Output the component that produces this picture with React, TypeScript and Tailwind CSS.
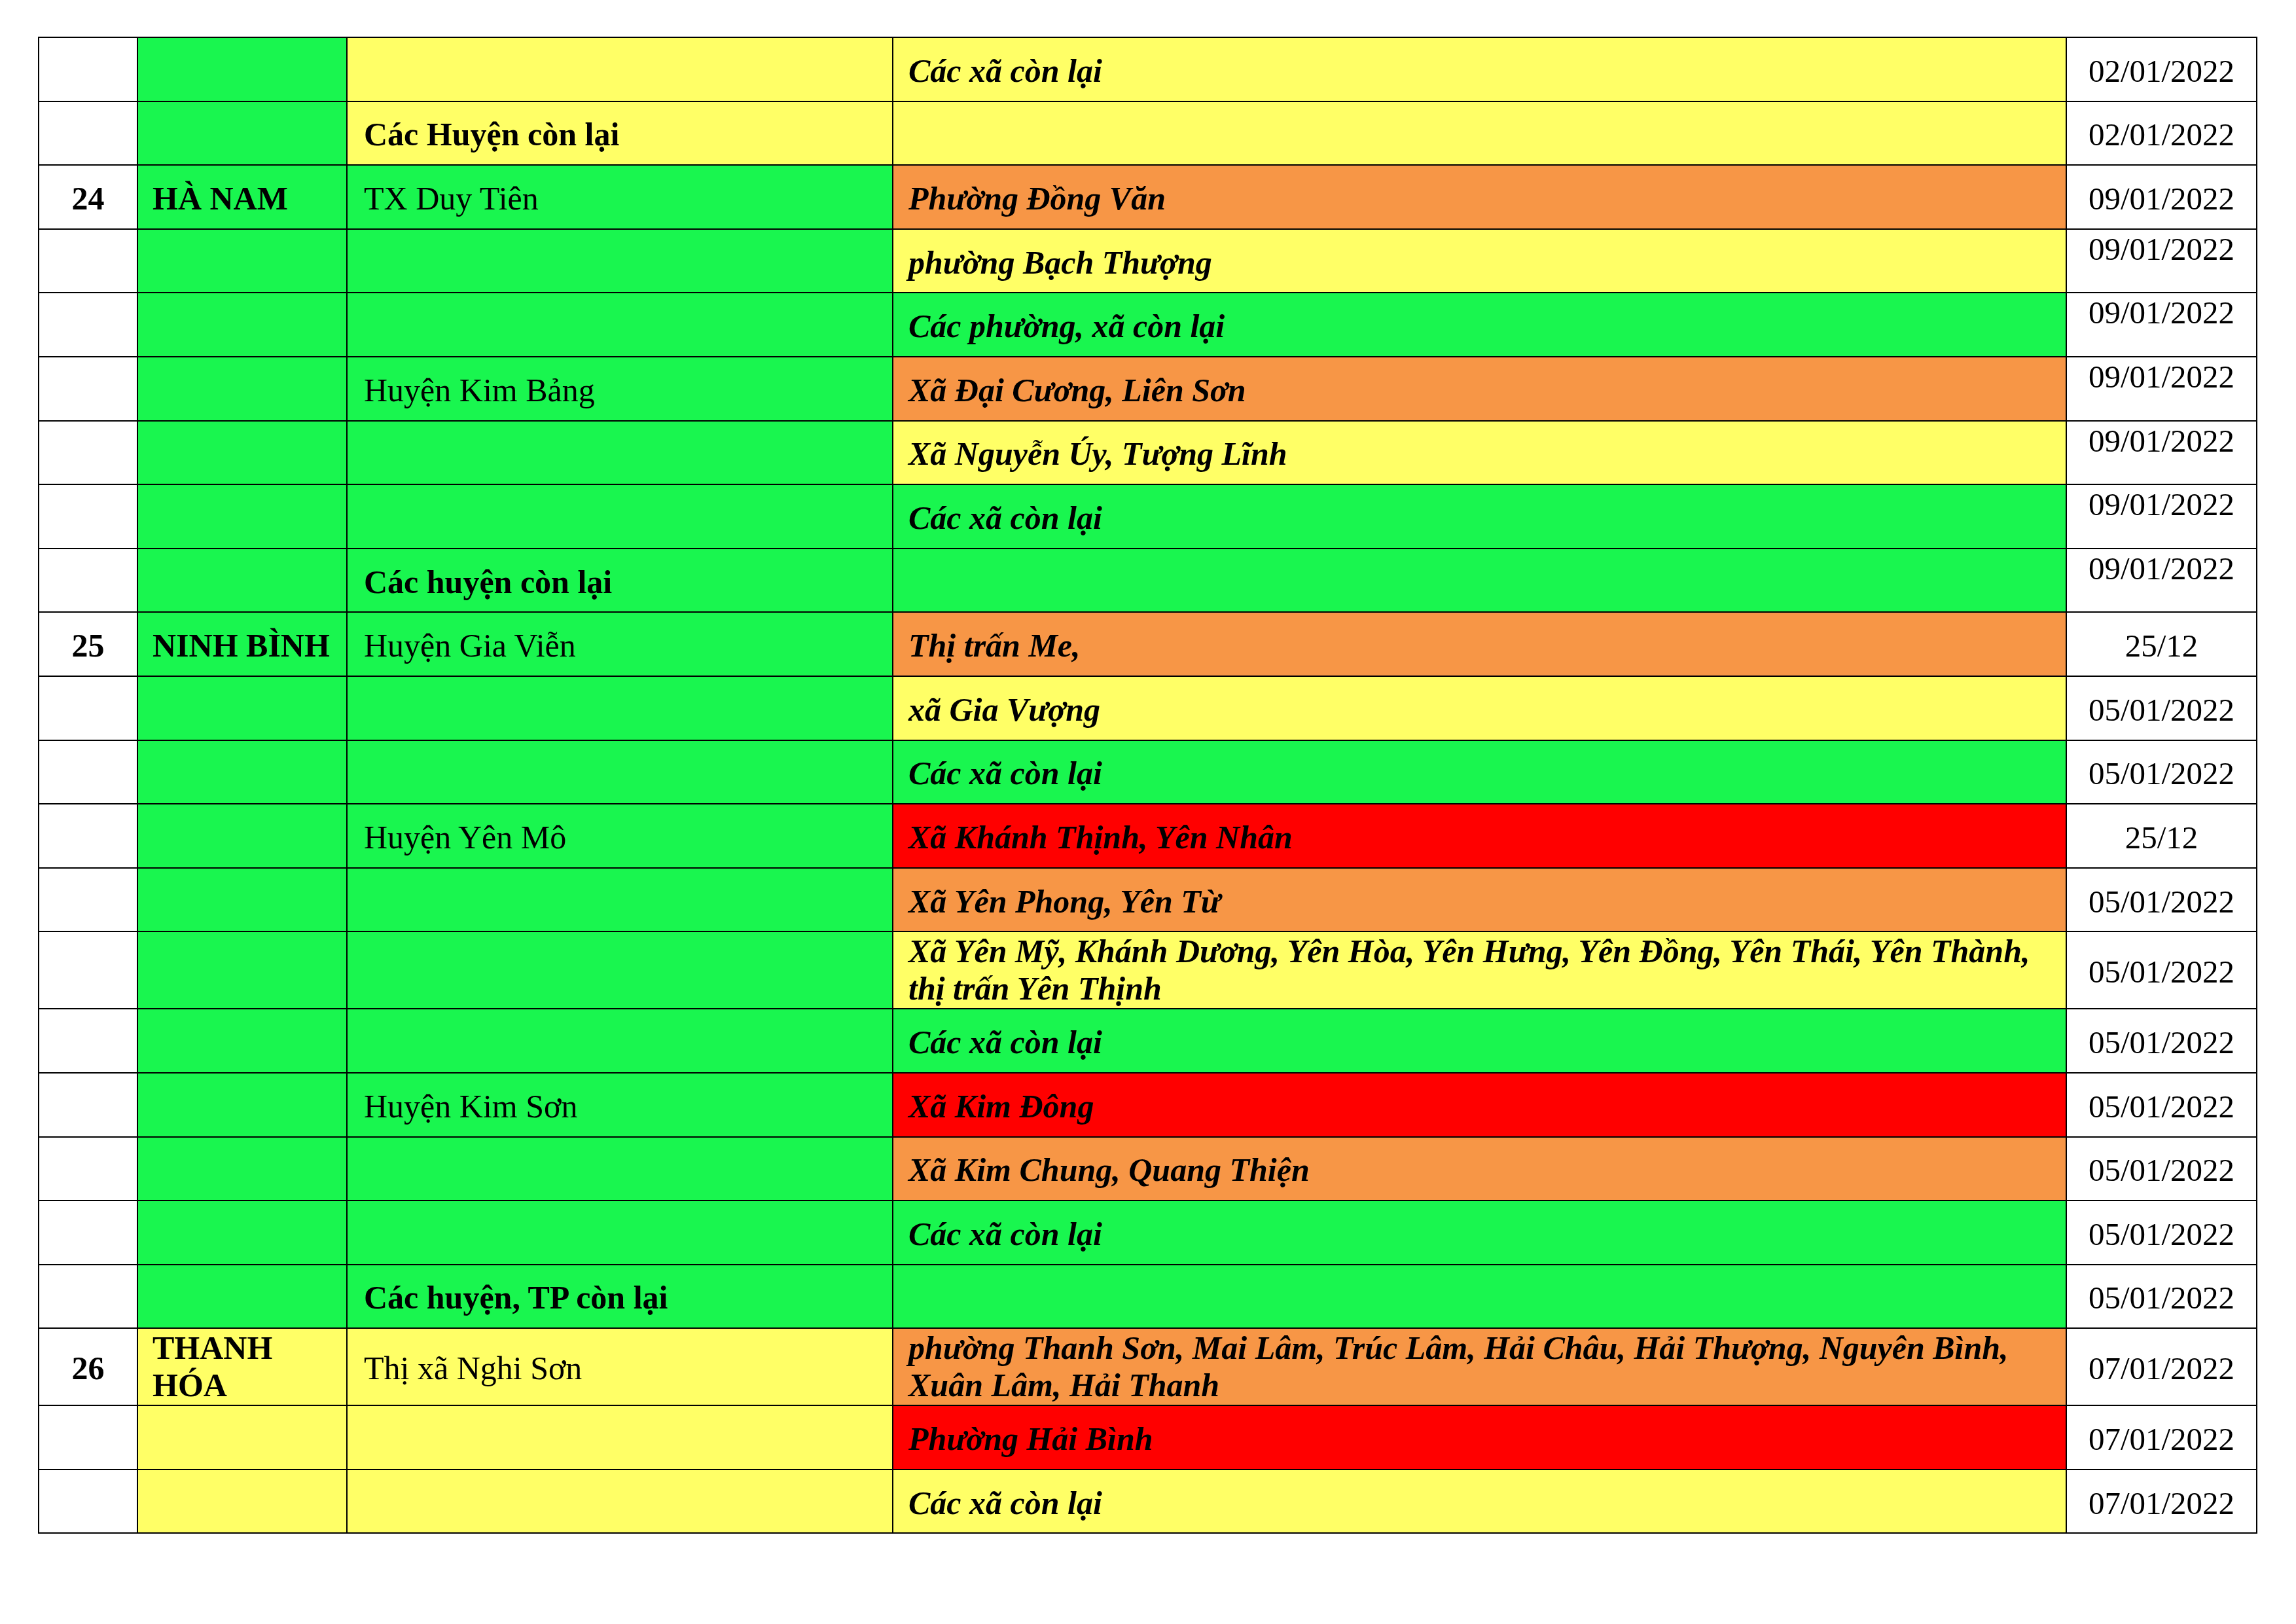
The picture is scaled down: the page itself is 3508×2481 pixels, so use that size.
import React from "react";

type C = "w" | "g" | "y" | "o" | "r";
const BG: Record<C, string> = {
  w: "bg-white",
  g: "bg-[#19f64f]",
  y: "bg-[#ffff66]",
  o: "bg-[#f79646]",
  r: "bg-[#ff0000]",
};

type Row = {
  no?: string;
  prov?: React.ReactNode;
  provTwo?: boolean;
  provBg: C;
  dist?: string;
  distBold?: boolean;
  distBg: C;
  comm?: React.ReactNode;
  commTwo?: boolean;
  commBg: C;
  date: string;
  top?: boolean;
};

const rows: Row[] = [
  { provBg: "g", distBg: "y", comm: "Các xã còn lại", commBg: "y", date: "02/01/2022" },
  { provBg: "g", dist: "Các Huyện còn lại", distBold: true, distBg: "y", commBg: "y", date: "02/01/2022" },
  { no: "24", prov: "HÀ NAM", provBg: "g", dist: "TX Duy Tiên", distBg: "g", comm: "Phường Đồng Văn", commBg: "o", date: "09/01/2022" },
  { provBg: "g", distBg: "g", comm: "phường Bạch Thượng", commBg: "y", date: "09/01/2022", top: true },
  { provBg: "g", distBg: "g", comm: "Các phường, xã còn lại", commBg: "g", date: "09/01/2022", top: true },
  { provBg: "g", dist: "Huyện Kim Bảng", distBg: "g", comm: "Xã Đại Cương, Liên Sơn", commBg: "o", date: "09/01/2022", top: true },
  { provBg: "g", distBg: "g", comm: "Xã Nguyễn Úy, Tượng Lĩnh", commBg: "y", date: "09/01/2022", top: true },
  { provBg: "g", distBg: "g", comm: "Các xã còn lại", commBg: "g", date: "09/01/2022", top: true },
  { provBg: "g", dist: "Các huyện còn lại", distBold: true, distBg: "g", commBg: "g", date: "09/01/2022", top: true },
  { no: "25", prov: "NINH BÌNH", provBg: "g", dist: "Huyện Gia Viễn", distBg: "g", comm: "Thị trấn Me,", commBg: "o", date: "25/12" },
  { provBg: "g", distBg: "g", comm: "xã Gia Vượng", commBg: "y", date: "05/01/2022" },
  { provBg: "g", distBg: "g", comm: "Các xã còn lại", commBg: "g", date: "05/01/2022" },
  { provBg: "g", dist: "Huyện Yên Mô", distBg: "g", comm: "Xã Khánh Thịnh, Yên Nhân", commBg: "r", date: "25/12" },
  { provBg: "g", distBg: "g", comm: "Xã Yên Phong, Yên Từ", commBg: "o", date: "05/01/2022" },
  {
    provBg: "g",
    distBg: "g",
    comm: (
      <>
        Xã Yên Mỹ, Khánh Dương, Yên Hòa, Yên Hưng, Yên Đồng, Yên Thái, Yên Thành,
        <br />
        thị trấn Yên Thịnh
      </>
    ),
    commTwo: true,
    commBg: "y",
    date: "05/01/2022",
  },
  { provBg: "g", distBg: "g", comm: "Các xã còn lại", commBg: "g", date: "05/01/2022" },
  { provBg: "g", dist: "Huyện Kim Sơn", distBg: "g", comm: "Xã Kim Đông", commBg: "r", date: "05/01/2022" },
  { provBg: "g", distBg: "g", comm: "Xã Kim Chung, Quang Thiện", commBg: "o", date: "05/01/2022" },
  { provBg: "g", distBg: "g", comm: "Các xã còn lại", commBg: "g", date: "05/01/2022" },
  { provBg: "g", dist: "Các huyện, TP còn lại", distBold: true, distBg: "g", commBg: "g", date: "05/01/2022" },
  {
    no: "26",
    prov: (
      <>
        THANH
        <br />
        HÓA
      </>
    ),
    provTwo: true,
    provBg: "y",
    dist: "Thị xã Nghi Sơn",
    distBg: "y",
    comm: (
      <>
        phường Thanh Sơn, Mai Lâm, Trúc Lâm, Hải Châu, Hải Thượng, Nguyên Bình,
        <br />
        Xuân Lâm, Hải Thanh
      </>
    ),
    commTwo: true,
    commBg: "o",
    date: "07/01/2022",
  },
  { provBg: "y", distBg: "y", comm: "Phường Hải Bình", commBg: "r", date: "07/01/2022" },
  { provBg: "y", distBg: "y", comm: "Các xã còn lại", commBg: "y", date: "07/01/2022" },
];

function Cell({
  bg,
  top,
  two,
  center,
  extra,
  children,
}: {
  bg: C;
  top?: boolean;
  two?: boolean;
  center?: boolean;
  extra?: string;
  children?: React.ReactNode;
}) {
  const v = two ? "items-center py-[1px]" : top ? "items-start pt-[1px]" : "items-center pt-[5px]";
  const h = center ? "justify-center" : "justify-start";
  return (
    <div className={`flex min-h-[95.6px] leading-[57px] text-black ${BG[bg]} ${v} ${h} ${extra ?? ""}`}>
      <div>{children}</div>
    </div>
  );
}

export default function App() {
  return (
    <div className="w-[3508px] h-[2481px] bg-white pt-[56px] pl-[58px] font-['Liberation_Serif',serif]">
      <div className="grid w-fit grid-cols-[149px_318px_832px_1791px_289px] gap-[2px] bg-black p-[2px]">
        {rows.map((r, i) => (
          <React.Fragment key={i}>
            <Cell bg="w" center extra="font-bold text-[50px]">
              {r.no}
            </Cell>
            <Cell bg={r.provBg} two={r.provTwo} extra="font-bold text-[50px] pl-[22px]">
              {r.prov}
            </Cell>
            <Cell bg={r.distBg} extra={`text-[50px] pl-[25px] ${r.distBold ? "font-bold" : ""}`}>
              {r.dist}
            </Cell>
            <Cell bg={r.commBg} two={r.commTwo} extra="font-bold italic text-[50px] pl-[23px]">
              {r.comm}
            </Cell>
            <Cell bg="w" top={r.top} center extra="text-[49px]">
              {r.date}
            </Cell>
          </React.Fragment>
        ))}
      </div>
    </div>
  );
}
